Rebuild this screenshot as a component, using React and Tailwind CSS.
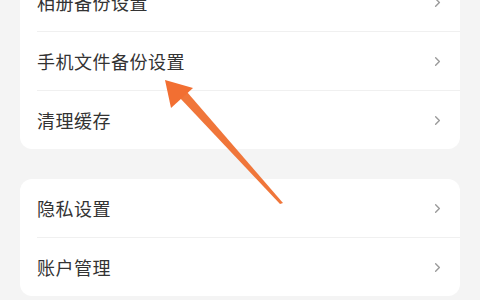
import { ChevronRight } from 'lucide-react'

const groups = [
  ['相册备份设置', '手机文件备份设置', '清理缓存'],
  ['隐私设置', '账户管理'],
]

function Row({ label, last }) {
  return (
    <div className="relative">
      <div className="h-[58px] flex items-center justify-between pl-[17px] pr-[15px]">
        <span className="text-[18px] text-[#333] tracking-[0.5px]">{label}</span>
        <ChevronRight className="w-[15px] h-[15px] text-[#9a9a9a]" strokeWidth={2.2} />
      </div>
      {!last && <div className="ml-[17px] h-px bg-[#f0f0f0]" />}
    </div>
  )
}

export default function App() {
  return (
    <div
      className="relative w-[480px] h-[300px] overflow-hidden bg-[#f4f4f4]"
      style={{ fontFamily: '"Noto Sans CJK SC", "Noto Sans", sans-serif' }}
    >
      <div className="flex flex-col gap-[30px] px-[20px] -mt-[27px]">
        {groups.map((items, gi) => (
          <div key={gi} className="bg-white rounded-[12px]">
            {items.map((label, i) => (
              <Row key={label} label={label} last={i === items.length - 1} />
            ))}
          </div>
        ))}
      </div>

      {/* orange annotation arrow */}
      <svg className="absolute inset-0 pointer-events-none" width="480" height="300" viewBox="0 0 480 300">
        <polygon points="180,98 187,92 283,203 280,204" fill="#f0763a" />
        <polygon points="165,80 193,88 171,108" fill="#f26f32" />
      </svg>
    </div>
  )
}
